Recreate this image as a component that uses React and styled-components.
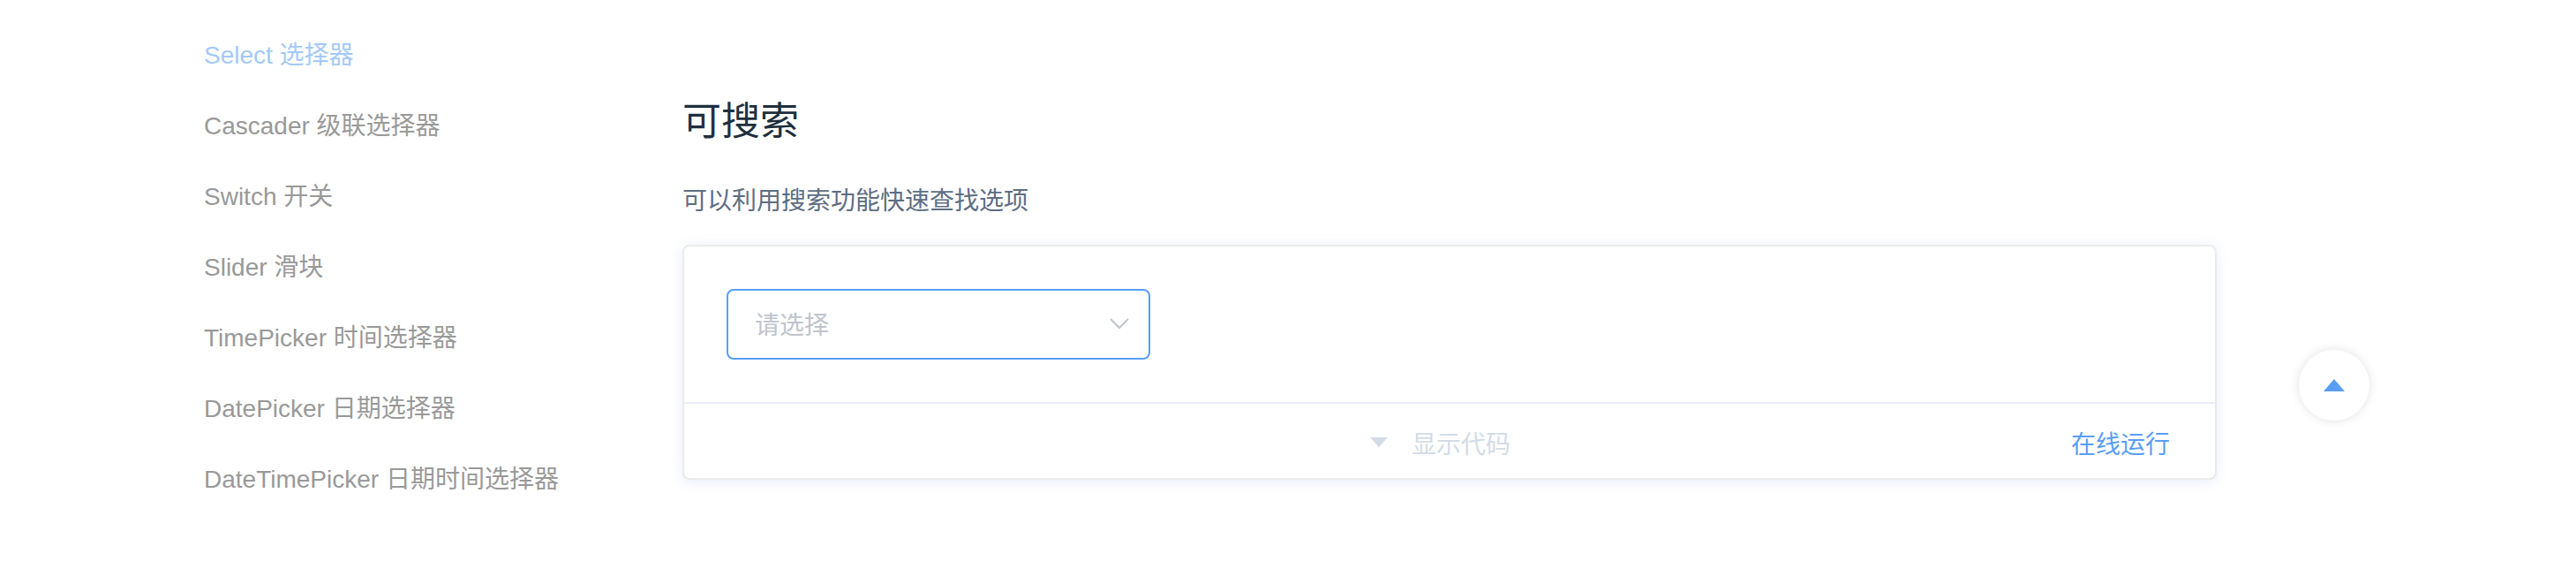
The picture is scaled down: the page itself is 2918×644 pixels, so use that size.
import React from "react";
import styled, { createGlobalStyle } from "styled-components";

const GlobalStyle = createGlobalStyle`
  html, body {
    margin: 0;
    padding: 0;
    background: #fff;
  }
  body {
    font-family: "Liberation Sans", "Noto Sans CJK SC", sans-serif;
  }
`;

const Page = styled.div`
  display: flex;
  align-items: flex-start;
  width: 2918px;
  height: 644px;
`;

const Sidebar = styled.ul`
  box-sizing: border-box;
  width: 773px;
  flex: none;
  margin: 0;
  padding: 23px 0 0 231px;
  list-style: none;
`;

const NavItem = styled.li`
  height: 80px;
  line-height: 80px;
  font-size: 28px;
  white-space: nowrap;
  color: ${(p) => (p.active ? "#a3c9f7" : "#999")};
`;

const Main = styled.main`
  width: 1738px;
  flex: none;
  padding-top: 108px;
`;

const Title = styled.h3`
  margin: 0 0 39px;
  height: 60px;
  line-height: 60px;
  font-size: 44px;
  font-weight: 400;
  color: #1f2f3d;
`;

const Desc = styled.p`
  margin: 0 0 28px;
  height: 42px;
  line-height: 42px;
  font-size: 28px;
  color: #5e6d82;
`;

const DemoBlock = styled.section`
  box-sizing: border-box;
  border: 2px solid #ebebeb;
  border-radius: 8px;
  background: #fff;
  box-shadow: 0 0 16px 0 rgba(232, 237, 250, 0.6),
    0 4px 8px 0 rgba(232, 237, 250, 0.5);
`;

const Source = styled.div`
  padding: 48px;
  border-bottom: 2px solid #eaeefb;
`;

const SelectBox = styled.div`
  box-sizing: border-box;
  display: flex;
  align-items: center;
  width: 480px;
  height: 80px;
  padding: 0 22px 2px 30px;
  border: 2px solid #589ef8;
  border-radius: 8px;
`;

const Placeholder = styled.span`
  font-size: 28px;
  color: #c0c4cc;
`;

const Chevron = styled.svg`
  margin-left: auto;
  display: block;
`;

const Control = styled.div`
  box-sizing: border-box;
  display: flex;
  align-items: center;
  height: 84px;
  padding: 3px 51px 0 777px;
`;

const Caret = styled.svg`
  display: block;
  margin-right: 27px;
`;

const ControlText = styled.span`
  font-size: 28px;
  color: ${(p) => (p.link ? "#589ef8" : "#d3dce6")};
  margin-left: ${(p) => (p.link ? "auto" : "0")};
`;

const BackTop = styled.div`
  position: fixed;
  top: 396px;
  right: 234px;
  width: 80px;
  height: 80px;
  border-radius: 50%;
  background: #fff;
  box-shadow: 0 0 12px rgba(0, 0, 0, 0.12);
  display: flex;
  align-items: center;
  justify-content: center;
`;

const navItems = [
  "Select 选择器",
  "Cascader 级联选择器",
  "Switch 开关",
  "Slider 滑块",
  "TimePicker 时间选择器",
  "DatePicker 日期选择器",
  "DateTimePicker 日期时间选择器",
];

const App = () => {
  return (
    <>
      <GlobalStyle />
      <Page>
        <Sidebar>
          {navItems.map((item, i) => (
            <NavItem key={item} active={i === 0}>
              {item}
            </NavItem>
          ))}
        </Sidebar>

        <Main>
          <Title>可搜索</Title>
          <Desc>可以利用搜索功能快速查找选项</Desc>
          <DemoBlock>
            <Source>
              <SelectBox>
                <Placeholder>请选择</Placeholder>
                <Chevron width="22" height="13" viewBox="0 0 22 13">
                  <polyline
                    points="1,1 11,11 21,1"
                    fill="none"
                    stroke="#c0c4cc"
                    strokeWidth="2"
                  />
                </Chevron>
              </SelectBox>
            </Source>
            <Control>
              <Caret width="20" height="11" viewBox="0 0 20 11">
                <polygon points="0,0 20,0 10,11" fill="#d3dce6" />
              </Caret>
              <ControlText>显示代码</ControlText>
              <ControlText link>在线运行</ControlText>
            </Control>
          </DemoBlock>
        </Main>
      </Page>

      <BackTop>
        <svg width="24" height="14" viewBox="0 0 24 14">
          <polygon points="12,0 24,14 0,14" fill="#589ef8" />
        </svg>
      </BackTop>
    </>
  );
};

export default App;
